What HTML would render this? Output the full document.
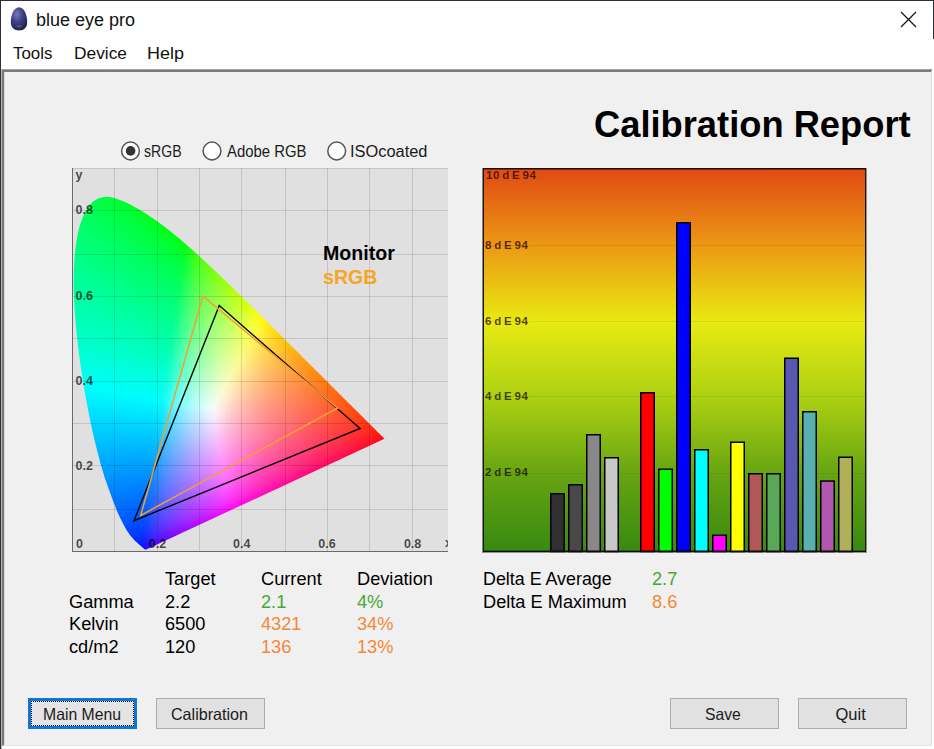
<!DOCTYPE html>
<html><head><meta charset="utf-8">
<style>
html,body{margin:0;padding:0;}
body{width:934px;height:749px;overflow:hidden;position:relative;background:#fff;font-family:"Liberation Sans",sans-serif;color:#000;}
.a{position:absolute;white-space:nowrap;line-height:1;}
#frameL{left:0;top:0;width:1px;height:749px;background:#2c2f37;}
#frameL2{left:1px;top:69px;width:1px;height:680px;background:#b4b6bc;}
#panelL{left:4px;top:72px;width:1px;height:673px;background:#dcdcde;}
#frameT{left:0;top:0;width:934px;height:1px;background:#2c2f37;}
#frameR{left:933px;top:0;width:1px;height:39px;background:#2c2f37;}
#panel{left:2px;top:69px;width:930px;height:677px;background:#f0f0f0;box-sizing:border-box;border-top:3px solid #7a7a7a;border-left:2px solid #787878;border-right:1px solid #e0e0e0;border-bottom:1px solid #e3e3e3;}
#panelT{left:2px;top:69px;width:929px;height:1px;background:#a4a4a4;}
.btn{position:absolute;box-sizing:border-box;background:#e1e1e1;border:1px solid #adadad;font-size:15.5px;text-align:center;line-height:29px;color:#000;}
.bt{top:706.3px;font-size:16.5px;transform-origin:0 0;color:#1a1a1a;}
.tbl{font-size:17.5px;transform:scaleX(1.04);transform-origin:0 0;}
.mn{top:45px;font-size:16.2px;transform-origin:0 0;color:#111;}
.rl{font-size:16px;transform-origin:0 0;color:#1a1a1a;}
.grn{color:#48a634;}
.org{color:#f28a38;}
.cl{font-size:12.5px;font-weight:bold;color:rgba(0,0,0,0.7);}
.cc{transform:translateX(-50%);}
.lbl{font-size:11.5px;font-weight:bold;color:rgba(25,0,0,0.72);letter-spacing:0.6px;word-spacing:-1.6px;}
</style></head><body>
<div class="a" id="frameT"></div>
<div class="a" id="frameL"></div>
<div class="a" id="frameR"></div>
<!-- icon -->
<svg class="a" style="left:8px;top:5px" width="24" height="28" viewBox="0 0 24 28">
<defs><radialGradient id="egg" cx="0.38" cy="0.3" r="0.75"><stop offset="0" stop-color="#7a7ab8"/><stop offset="0.45" stop-color="#40408a"/><stop offset="0.85" stop-color="#2a2a5e"/><stop offset="1" stop-color="#1c1c38"/></radialGradient></defs>
<path d="M11 2.3 C16.5 2.3 19.2 11 19.2 17 C19.2 22.5 16 25.5 11 25.5 C6 25.5 2.8 22.5 2.8 17 C2.8 11 5.5 2.3 11 2.3 Z" fill="url(#egg)"/>
<ellipse cx="11.3" cy="21.3" rx="2.6" ry="0.9" fill="#8888c0" opacity="0.5"/>
</svg>
<div class="a" style="left:35.6px;top:12px;font-size:17.6px;transform:scaleX(1.023);transform-origin:0 0;color:#111;">blue eye pro</div>
<svg class="a" style="left:900px;top:11px" width="18" height="18"><path d="M1 1 L16 16 M16 1 L1 16" stroke="#111" stroke-width="1.2"/></svg>
<div class="a mn" style="left:13.2px;transform:scaleX(1.044);">Tools</div>
<div class="a mn" style="left:73.5px;transform:scaleX(1.07);">Device</div>
<div class="a mn" style="left:147px;transform:scaleX(1.11);">Help</div>

<div class="a" id="panel"></div>
<div class="a" id="panelT"></div>
<div class="a" id="frameL2"></div>
<div class="a" id="panelL"></div>

<div class="a" style="left:594px;top:106.6px;font-size:36.3px;font-weight:bold;">Calibration Report</div>

<!-- radios -->
<svg class="a" style="left:120px;top:141px" width="230" height="20">
<circle cx="10.5" cy="10" r="8.9" fill="#fff" stroke="#555" stroke-width="1.5"/>
<circle cx="10.6" cy="9.9" r="4.8" fill="#333"/>
<circle cx="92" cy="10" r="8.9" fill="#fff" stroke="#555" stroke-width="1.5"/>
<circle cx="216.7" cy="10" r="8.9" fill="#fff" stroke="#555" stroke-width="1.5"/>
</svg>
<div class="a rl" style="left:144.2px;top:143.7px;transform:scaleX(0.88);">sRGB</div>
<div class="a rl" style="left:226.5px;top:143.7px;transform:scaleX(0.93);">Adobe RGB</div>
<div class="a rl" style="left:349.6px;top:143.7px;transform:scaleX(1.025);">ISOcoated</div>

<!-- CIE chart -->
<svg class="a" style="left:72px;top:168px" width="376" height="384"><rect x="0" y="0" width="376" height="384" fill="#e0e0e0"/><defs><clipPath id="loc"><path d="M74.2,381.5 L74.2,381.5 L74.2,381.5 L74.1,381.5 L74.1,381.5 L74.1,381.5 L74.1,381.5 L74.1,381.5 L74.1,381.5 L74.1,381.5 L74.1,381.5 L74.1,381.5 L74.1,381.6 L74.1,381.6 L74.1,381.6 L74.0,381.6 L74.0,381.6 L74.0,381.6 L74.0,381.6 L74.0,381.6 L74.0,381.6 L74.0,381.6 L74.0,381.6 L74.0,381.6 L73.9,381.6 L73.9,381.6 L73.9,381.6 L73.9,381.6 L73.9,381.6 L73.9,381.6 L73.9,381.6 L73.8,381.6 L73.8,381.6 L73.8,381.6 L73.8,381.6 L73.8,381.6 L73.8,381.6 L73.7,381.6 L73.7,381.6 L73.7,381.6 L73.7,381.6 L73.7,381.6 L73.7,381.6 L73.6,381.6 L73.6,381.6 L73.6,381.6 L73.6,381.6 L73.5,381.6 L73.5,381.6 L73.5,381.6 L73.5,381.6 L73.4,381.6 L73.4,381.6 L73.4,381.6 L73.4,381.6 L73.3,381.6 L73.3,381.6 L73.3,381.6 L73.2,381.6 L73.2,381.6 L73.2,381.6 L73.1,381.6 L73.1,381.5 L73.1,381.5 L73.0,381.5 L73.0,381.5 L72.9,381.4 L72.9,381.4 L72.8,381.4 L72.7,381.3 L72.7,381.3 L72.6,381.2 L72.5,381.2 L72.5,381.1 L72.4,381.1 L72.3,381.0 L72.3,381.0 L72.2,380.9 L72.1,380.9 L72.0,380.8 L71.9,380.7 L71.9,380.6 L71.8,380.6 L71.7,380.5 L71.6,380.4 L71.4,380.3 L71.3,380.2 L71.2,380.1 L71.1,380.0 L71.0,379.9 L70.9,379.8 L70.7,379.7 L70.6,379.5 L70.5,379.4 L70.3,379.3 L70.2,379.2 L70.0,379.0 L69.9,378.9 L69.7,378.7 L69.6,378.6 L69.4,378.4 L69.2,378.3 L69.0,378.1 L68.8,378.0 L68.6,377.8 L68.4,377.6 L68.2,377.4 L68.0,377.2 L67.7,377.0 L67.5,376.8 L67.2,376.6 L67.0,376.4 L66.7,376.1 L66.4,375.9 L66.2,375.7 L65.9,375.4 L65.6,375.1 L65.3,374.9 L65.0,374.6 L64.7,374.3 L64.3,374.0 L64.0,373.7 L63.6,373.4 L63.3,373.0 L62.9,372.7 L62.5,372.3 L62.2,371.9 L61.8,371.5 L61.4,371.0 L60.9,370.6 L60.5,370.1 L60.1,369.6 L59.7,369.1 L59.2,368.6 L58.7,368.0 L58.3,367.4 L57.7,366.7 L57.2,365.9 L56.7,365.1 L56.1,364.3 L55.5,363.4 L54.9,362.4 L54.2,361.4 L53.6,360.3 L52.9,359.1 L52.2,357.8 L51.5,356.5 L50.8,355.1 L50.0,353.6 L49.2,352.1 L48.4,350.4 L47.6,348.7 L46.7,346.7 L45.8,344.7 L44.9,342.6 L44.0,340.4 L43.1,338.0 L42.1,335.5 L41.1,332.9 L40.0,330.1 L39.0,327.2 L37.8,324.1 L36.7,320.9 L35.5,317.5 L34.3,314.0 L33.0,310.4 L31.8,306.5 L30.6,302.5 L29.3,298.3 L28.1,293.9 L26.9,289.3 L25.6,284.5 L24.4,279.5 L23.1,274.4 L21.9,269.2 L20.6,263.7 L19.4,258.2 L18.2,252.4 L17.0,246.4 L15.8,240.3 L14.6,234.0 L13.4,227.6 L12.2,221.1 L11.1,214.6 L10.1,208.1 L9.1,201.5 L8.2,194.9 L7.3,188.1 L6.4,181.3 L5.6,174.5 L4.8,167.8 L4.2,161.1 L3.6,154.6 L3.1,148.2 L2.7,141.8 L2.3,135.4 L2.0,129.1 L1.8,122.8 L1.7,116.8 L1.7,110.8 L1.8,105.1 L2.0,99.5 L2.3,94.0 L2.7,88.6 L3.1,83.4 L3.7,78.3 L4.4,73.5 L5.2,68.9 L6.0,64.5 L7.0,60.4 L8.1,56.5 L9.4,52.9 L10.7,49.4 L12.1,46.2 L13.6,43.3 L15.1,40.6 L16.7,38.2 L18.3,36.2 L20.1,34.4 L21.9,33.0 L23.8,31.8 L25.7,30.8 L27.7,30.0 L29.7,29.4 L31.7,29.0 L33.7,28.7 L35.8,28.8 L37.9,29.0 L40.1,29.5 L42.2,30.0 L44.4,30.7 L46.5,31.4 L48.7,32.2 L50.8,33.0 L53.0,33.9 L55.2,35.0 L57.3,36.1 L59.5,37.2 L61.7,38.4 L63.8,39.6 L65.9,40.8 L68.0,42.0 L70.1,43.3 L72.1,44.5 L74.1,45.8 L76.1,47.1 L78.2,48.5 L80.2,49.8 L82.2,51.2 L84.1,52.6 L86.1,54.0 L88.1,55.4 L90.0,56.8 L91.9,58.3 L93.9,59.8 L95.8,61.3 L97.8,62.8 L99.7,64.3 L101.6,65.9 L103.6,67.4 L105.5,69.0 L107.4,70.6 L109.3,72.3 L111.2,73.9 L113.1,75.5 L115.1,77.2 L117.0,78.9 L118.9,80.6 L120.8,82.3 L122.7,84.0 L124.6,85.7 L126.5,87.4 L128.4,89.2 L130.3,90.9 L132.2,92.7 L134.1,94.4 L136.0,96.2 L137.9,98.0 L139.8,99.8 L141.7,101.6 L143.5,103.4 L145.5,105.2 L147.4,107.0 L149.3,108.8 L151.2,110.6 L153.1,112.5 L155.0,114.3 L156.9,116.2 L158.8,118.0 L160.7,119.8 L162.6,121.7 L164.5,123.5 L166.4,125.4 L168.2,127.3 L170.1,129.1 L172.0,131.0 L173.9,132.8 L175.8,134.7 L177.7,136.6 L179.6,138.4 L181.5,140.3 L183.3,142.1 L185.2,144.0 L187.1,145.8 L189.0,147.7 L190.8,149.5 L192.7,151.4 L194.5,153.2 L196.4,155.1 L198.2,156.9 L200.1,158.7 L201.9,160.6 L203.7,162.4 L205.5,164.2 L207.3,166.0 L209.1,167.8 L210.9,169.6 L212.7,171.4 L214.5,173.1 L216.3,174.9 L218.0,176.7 L219.8,178.4 L221.5,180.1 L223.3,181.9 L225.0,183.6 L226.7,185.3 L228.4,187.0 L230.1,188.7 L231.8,190.4 L233.4,192.0 L235.1,193.7 L236.7,195.3 L238.4,196.9 L240.0,198.5 L241.6,200.1 L243.1,201.7 L244.7,203.2 L246.2,204.7 L247.8,206.3 L249.3,207.8 L250.8,209.3 L252.2,210.7 L253.7,212.2 L255.1,213.6 L256.5,215.0 L257.8,216.3 L259.2,217.7 L260.5,219.0 L261.8,220.3 L263.0,221.5 L264.3,222.8 L265.5,224.0 L266.7,225.2 L267.9,226.4 L269.1,227.6 L270.3,228.7 L271.4,229.9 L272.5,231.0 L273.6,232.1 L274.7,233.1 L275.7,234.2 L276.8,235.2 L277.8,236.2 L278.7,237.1 L279.7,238.1 L280.6,239.0 L281.5,239.9 L282.4,240.7 L283.2,241.6 L284.1,242.4 L284.9,243.2 L285.7,244.0 L286.4,244.8 L287.2,245.5 L287.9,246.3 L288.6,247.0 L289.3,247.7 L290.0,248.3 L290.6,249.0 L291.3,249.6 L291.9,250.2 L292.5,250.8 L293.0,251.4 L293.6,252.0 L294.2,252.5 L294.7,253.0 L295.2,253.6 L295.7,254.1 L296.2,254.5 L296.7,255.0 L297.1,255.5 L297.6,255.9 L298.0,256.3 L298.5,256.8 L298.9,257.2 L299.3,257.6 L299.7,258.0 L300.0,258.3 L300.4,258.7 L300.8,259.1 L301.1,259.4 L301.5,259.8 L301.8,260.1 L302.2,260.5 L302.5,260.8 L302.8,261.1 L303.1,261.4 L303.4,261.7 L303.7,262.0 L304.0,262.3 L304.3,262.6 L304.6,262.9 L304.8,263.2 L305.1,263.4 L305.4,263.7 L305.6,263.9 L305.8,264.2 L306.1,264.4 L306.3,264.6 L306.5,264.8 L306.8,265.0 L307.0,265.3 L307.2,265.4 L307.4,265.6 L307.5,265.8 L307.7,266.0 L307.9,266.2 L308.1,266.3 L308.2,266.5 L308.4,266.7 L308.5,266.8 L308.7,267.0 L308.8,267.1 L309.0,267.2 L309.1,267.4 L309.2,267.5 L309.3,267.6 L309.5,267.7 L309.6,267.9 L309.7,268.0 L309.8,268.1 L309.9,268.2 L310.0,268.3 L310.1,268.4 L310.2,268.5 L310.3,268.6 L310.4,268.6 L310.4,268.7 L310.5,268.8 L310.6,268.9 L310.7,268.9 L310.7,269.0 L310.8,269.1 L310.8,269.1 L310.9,269.2 L310.9,269.2 L311.0,269.3 L311.0,269.3 L311.1,269.4 L311.1,269.4 L311.2,269.5 L311.2,269.5 L311.3,269.5 L311.3,269.6 L311.4,269.7 L311.4,269.7 L311.5,269.8 L311.6,269.9 L311.7,269.9 L311.7,270.0 L311.8,270.1 L311.9,270.2 L312.0,270.2 L312.0,270.3 L312.1,270.4 L312.2,270.5 L312.3,270.6 L312.4,270.6 L312.4,270.7 L312.5,270.8 L312.5,270.8 Z"/></clipPath><linearGradient id="g0" gradientUnits="userSpaceOnUse" x1="0" y1="71.5" x2="0" y2="165.5"><stop offset="0.000" stop-color="#00ff77"/><stop offset="1.000" stop-color="#00ffc6"/></linearGradient><linearGradient id="g1" gradientUnits="userSpaceOnUse" x1="0" y1="57.5" x2="0" y2="191.5"><stop offset="0.000" stop-color="#00ff6b"/><stop offset="0.776" stop-color="#00ffc2"/><stop offset="1.000" stop-color="#00ffe0"/></linearGradient><linearGradient id="g2" gradientUnits="userSpaceOnUse" x1="0" y1="48.5" x2="0" y2="211.5"><stop offset="0.000" stop-color="#00ff62"/><stop offset="0.687" stop-color="#00ffc0"/><stop offset="1.000" stop-color="#00fff6"/></linearGradient><linearGradient id="g3" gradientUnits="userSpaceOnUse" x1="0" y1="41.5" x2="0" y2="229.5"><stop offset="0.000" stop-color="#00ff5b"/><stop offset="0.633" stop-color="#00ffbf"/><stop offset="0.947" stop-color="#00fdfd"/><stop offset="1.000" stop-color="#00f3ff"/></linearGradient><linearGradient id="g4" gradientUnits="userSpaceOnUse" x1="0" y1="36.5" x2="0" y2="245.5"><stop offset="0.000" stop-color="#00ff54"/><stop offset="0.603" stop-color="#00ffc0"/><stop offset="0.880" stop-color="#00fdfd"/><stop offset="1.000" stop-color="#00e0ff"/></linearGradient><linearGradient id="g5" gradientUnits="userSpaceOnUse" x1="0" y1="33.5" x2="0" y2="259.5"><stop offset="0.000" stop-color="#00ff50"/><stop offset="0.575" stop-color="#00ffc0"/><stop offset="0.827" stop-color="#00fdfd"/><stop offset="1.000" stop-color="#00d0ff"/></linearGradient><linearGradient id="g6" gradientUnits="userSpaceOnUse" x1="0" y1="31.5" x2="0" y2="273.5"><stop offset="0.000" stop-color="#00ff4c"/><stop offset="0.554" stop-color="#00ffc1"/><stop offset="0.785" stop-color="#00fdfd"/><stop offset="1.000" stop-color="#00c0ff"/></linearGradient><linearGradient id="g7" gradientUnits="userSpaceOnUse" x1="0" y1="29.5" x2="0" y2="285.5"><stop offset="0.000" stop-color="#00ff47"/><stop offset="0.543" stop-color="#00ffc3"/><stop offset="0.750" stop-color="#00fdfd"/><stop offset="1.000" stop-color="#00b2ff"/></linearGradient><linearGradient id="g8" gradientUnits="userSpaceOnUse" x1="0" y1="28.5" x2="0" y2="296.5"><stop offset="0.000" stop-color="#00ff44"/><stop offset="0.530" stop-color="#00ffc4"/><stop offset="0.724" stop-color="#00fdfd"/><stop offset="1.000" stop-color="#00a6ff"/></linearGradient><linearGradient id="g9" gradientUnits="userSpaceOnUse" x1="0" y1="27.5" x2="0" y2="307.5"><stop offset="0.000" stop-color="#00ff40"/><stop offset="0.518" stop-color="#00ffc4"/><stop offset="0.696" stop-color="#00fdfd"/><stop offset="1.000" stop-color="#0099ff"/></linearGradient><linearGradient id="g10" gradientUnits="userSpaceOnUse" x1="0" y1="27.5" x2="0" y2="316.5"><stop offset="0.000" stop-color="#00ff3d"/><stop offset="0.287" stop-color="#00ff89"/><stop offset="0.543" stop-color="#00ffd0"/><stop offset="0.678" stop-color="#00fdfd"/><stop offset="1.000" stop-color="#008eff"/></linearGradient><linearGradient id="g11" gradientUnits="userSpaceOnUse" x1="0" y1="27.5" x2="0" y2="324.5"><stop offset="0.000" stop-color="#00ff3a"/><stop offset="0.226" stop-color="#00ff7a"/><stop offset="0.505" stop-color="#00ffc8"/><stop offset="0.660" stop-color="#00fdfd"/><stop offset="0.916" stop-color="#00a1ff"/><stop offset="1.000" stop-color="#0084ff"/></linearGradient><linearGradient id="g12" gradientUnits="userSpaceOnUse" x1="0" y1="27.5" x2="0" y2="332.5"><stop offset="0.000" stop-color="#00ff37"/><stop offset="0.190" stop-color="#00ff70"/><stop offset="0.482" stop-color="#00ffc3"/><stop offset="0.646" stop-color="#00fdfd"/><stop offset="1.000" stop-color="#007aff"/></linearGradient><linearGradient id="g13" gradientUnits="userSpaceOnUse" x1="0" y1="27.5" x2="0" y2="340.5"><stop offset="0.000" stop-color="#00ff34"/><stop offset="0.160" stop-color="#00ff67"/><stop offset="0.466" stop-color="#00ffc1"/><stop offset="0.629" stop-color="#00fdfd"/><stop offset="0.827" stop-color="#00b0ff"/><stop offset="1.000" stop-color="#006fff"/></linearGradient><linearGradient id="g14" gradientUnits="userSpaceOnUse" x1="0" y1="28.5" x2="0" y2="347.5"><stop offset="0.000" stop-color="#00ff32"/><stop offset="0.141" stop-color="#00ff61"/><stop offset="0.455" stop-color="#00ffc0"/><stop offset="0.614" stop-color="#00fdfc"/><stop offset="0.712" stop-color="#00d6ff"/><stop offset="1.000" stop-color="#0065ff"/></linearGradient><linearGradient id="g15" gradientUnits="userSpaceOnUse" x1="0" y1="28.5" x2="0" y2="354.5"><stop offset="0.000" stop-color="#00ff2e"/><stop offset="0.117" stop-color="#00ff58"/><stop offset="0.445" stop-color="#00ffbf"/><stop offset="0.604" stop-color="#00fdfd"/><stop offset="0.764" stop-color="#00bbff"/><stop offset="1.000" stop-color="#005aff"/></linearGradient><linearGradient id="g16" gradientUnits="userSpaceOnUse" x1="0" y1="29.5" x2="0" y2="359.5"><stop offset="0.000" stop-color="#00ff2b"/><stop offset="0.103" stop-color="#00ff53"/><stop offset="0.442" stop-color="#00ffc0"/><stop offset="0.594" stop-color="#00fdfc"/><stop offset="0.679" stop-color="#00d9ff"/><stop offset="0.985" stop-color="#0059ff"/><stop offset="1.000" stop-color="#0051ff"/></linearGradient><linearGradient id="g17" gradientUnits="userSpaceOnUse" x1="0" y1="31.5" x2="0" y2="364.5"><stop offset="0.000" stop-color="#00ff2a"/><stop offset="0.096" stop-color="#00ff51"/><stop offset="0.432" stop-color="#00ffbf"/><stop offset="0.586" stop-color="#00fdfc"/><stop offset="0.721" stop-color="#00c2ff"/><stop offset="0.967" stop-color="#0059ff"/><stop offset="1.000" stop-color="#0047ff"/></linearGradient><linearGradient id="g18" gradientUnits="userSpaceOnUse" x1="0" y1="32.5" x2="0" y2="369.5"><stop offset="0.000" stop-color="#00ff27"/><stop offset="0.083" stop-color="#00ff4b"/><stop offset="0.430" stop-color="#00ffc0"/><stop offset="0.576" stop-color="#00fdfc"/><stop offset="0.653" stop-color="#00dbff"/><stop offset="0.950" stop-color="#0059ff"/><stop offset="1.000" stop-color="#003cff"/></linearGradient><linearGradient id="g19" gradientUnits="userSpaceOnUse" x1="0" y1="33.5" x2="0" y2="372.5"><stop offset="0.000" stop-color="#00ff24"/><stop offset="0.068" stop-color="#00ff44"/><stop offset="0.434" stop-color="#00ffc2"/><stop offset="0.572" stop-color="#00fdfc"/><stop offset="0.687" stop-color="#00c9ff"/><stop offset="0.938" stop-color="#0059ff"/><stop offset="1.000" stop-color="#0033ff"/></linearGradient><linearGradient id="g20" gradientUnits="userSpaceOnUse" x1="0" y1="35.5" x2="0" y2="375.5"><stop offset="0.000" stop-color="#00ff22"/><stop offset="0.062" stop-color="#00ff41"/><stop offset="0.435" stop-color="#00ffc4"/><stop offset="0.565" stop-color="#00fdfc"/><stop offset="0.635" stop-color="#00ddff"/><stop offset="0.926" stop-color="#0059ff"/><stop offset="0.988" stop-color="#0033ff"/><stop offset="1.000" stop-color="#0028ff"/></linearGradient><linearGradient id="g21" gradientUnits="userSpaceOnUse" x1="0" y1="36.5" x2="0" y2="378.5"><stop offset="0.000" stop-color="#00ff1f"/><stop offset="0.053" stop-color="#00ff3b"/><stop offset="0.231" stop-color="#00ff7b"/><stop offset="0.442" stop-color="#00ffc7"/><stop offset="0.561" stop-color="#00fdfc"/><stop offset="0.664" stop-color="#00cdff"/><stop offset="0.915" stop-color="#0059ff"/><stop offset="0.977" stop-color="#0132ff"/><stop offset="1.000" stop-color="#011bff"/></linearGradient><linearGradient id="g22" gradientUnits="userSpaceOnUse" x1="0" y1="38.5" x2="0" y2="380.5"><stop offset="0.000" stop-color="#00ff1d"/><stop offset="0.050" stop-color="#00ff39"/><stop offset="0.208" stop-color="#00ff74"/><stop offset="0.433" stop-color="#00ffc5"/><stop offset="0.556" stop-color="#00fdfc"/><stop offset="0.623" stop-color="#00deff"/><stop offset="0.906" stop-color="#0159ff"/><stop offset="0.965" stop-color="#0334ff"/><stop offset="1.000" stop-color="#0610ff"/></linearGradient><linearGradient id="g23" gradientUnits="userSpaceOnUse" x1="0" y1="40.5" x2="0" y2="383.5"><stop offset="0.000" stop-color="#00ff1b"/><stop offset="0.047" stop-color="#00ff37"/><stop offset="0.190" stop-color="#00ff6e"/><stop offset="0.423" stop-color="#00ffc3"/><stop offset="0.551" stop-color="#00fdfc"/><stop offset="0.644" stop-color="#00d0ff"/><stop offset="0.895" stop-color="#0359ff"/><stop offset="0.953" stop-color="#0933ff"/><stop offset="0.997" stop-color="#1006ff"/><stop offset="1.000" stop-color="#1005ff"/></linearGradient><linearGradient id="g24" gradientUnits="userSpaceOnUse" x1="0" y1="42.5" x2="0" y2="383.5"><stop offset="0.000" stop-color="#00ff19"/><stop offset="0.044" stop-color="#00ff35"/><stop offset="0.173" stop-color="#00ff67"/><stop offset="0.416" stop-color="#00ffc0"/><stop offset="0.548" stop-color="#00fdfc"/><stop offset="0.610" stop-color="#00e0ff"/><stop offset="0.848" stop-color="#0470ff"/><stop offset="0.933" stop-color="#1040ff"/><stop offset="0.965" stop-color="#1825ff"/><stop offset="0.991" stop-color="#1e08ff"/><stop offset="1.000" stop-color="#1f03ff"/></linearGradient><linearGradient id="g25" gradientUnits="userSpaceOnUse" x1="0" y1="43.5" x2="0" y2="383.5"><stop offset="0.000" stop-color="#00ff14"/><stop offset="0.041" stop-color="#00ff31"/><stop offset="0.150" stop-color="#00ff5e"/><stop offset="0.418" stop-color="#00ffc0"/><stop offset="0.550" stop-color="#00fdfc"/><stop offset="0.635" stop-color="#00d3ff"/><stop offset="0.800" stop-color="#0586ff"/><stop offset="0.897" stop-color="#1654ff"/><stop offset="0.950" stop-color="#2430ff"/><stop offset="0.988" stop-color="#2e07ff"/><stop offset="1.000" stop-color="#2f01ff"/></linearGradient><linearGradient id="g26" gradientUnits="userSpaceOnUse" x1="0" y1="45.5" x2="0" y2="381.5"><stop offset="0.000" stop-color="#00ff12"/><stop offset="0.045" stop-color="#00ff31"/><stop offset="0.155" stop-color="#00ff5f"/><stop offset="0.420" stop-color="#00ffc0"/><stop offset="0.551" stop-color="#00fdfc"/><stop offset="0.610" stop-color="#00e1ff"/><stop offset="0.750" stop-color="#069eff"/><stop offset="0.848" stop-color="#196fff"/><stop offset="0.932" stop-color="#2f40ff"/><stop offset="0.964" stop-color="#3623ff"/><stop offset="0.991" stop-color="#3c06ff"/><stop offset="1.000" stop-color="#3d02ff"/></linearGradient><linearGradient id="g27" gradientUnits="userSpaceOnUse" x1="0" y1="47.5" x2="0" y2="380.5"><stop offset="0.000" stop-color="#00ff10"/><stop offset="0.045" stop-color="#00ff30"/><stop offset="0.150" stop-color="#00ff5c"/><stop offset="0.420" stop-color="#00ffc0"/><stop offset="0.553" stop-color="#00fdfc"/><stop offset="0.631" stop-color="#01d7ff"/><stop offset="0.730" stop-color="#0ca7ff"/><stop offset="0.895" stop-color="#3656ff"/><stop offset="0.949" stop-color="#4131ff"/><stop offset="0.991" stop-color="#4806ff"/><stop offset="1.000" stop-color="#4902ff"/></linearGradient><linearGradient id="g28" gradientUnits="userSpaceOnUse" x1="0" y1="49.5" x2="0" y2="379.5"><stop offset="0.000" stop-color="#00ff0e"/><stop offset="0.045" stop-color="#00ff2f"/><stop offset="0.142" stop-color="#00ff58"/><stop offset="0.421" stop-color="#00ffc0"/><stop offset="0.552" stop-color="#01fdfc"/><stop offset="0.609" stop-color="#04e2ff"/><stop offset="0.703" stop-color="#14b4ff"/><stop offset="0.879" stop-color="#415eff"/><stop offset="0.942" stop-color="#4c36ff"/><stop offset="0.973" stop-color="#5016ff"/><stop offset="0.991" stop-color="#5205ff"/><stop offset="1.000" stop-color="#5301ff"/></linearGradient><linearGradient id="g29" gradientUnits="userSpaceOnUse" x1="0" y1="52.5" x2="0" y2="377.5"><stop offset="0.000" stop-color="#00ff0e"/><stop offset="0.046" stop-color="#00ff2f"/><stop offset="0.145" stop-color="#00ff59"/><stop offset="0.422" stop-color="#00ffc0"/><stop offset="0.554" stop-color="#05fdfc"/><stop offset="0.628" stop-color="#11d9ff"/><stop offset="0.818" stop-color="#437eff"/><stop offset="0.920" stop-color="#5347ff"/><stop offset="0.957" stop-color="#572aff"/><stop offset="0.991" stop-color="#5b06ff"/><stop offset="1.000" stop-color="#5c02ff"/></linearGradient><linearGradient id="g30" gradientUnits="userSpaceOnUse" x1="0" y1="54.5" x2="0" y2="376.5"><stop offset="0.000" stop-color="#00ff0c"/><stop offset="0.050" stop-color="#00ff2f"/><stop offset="0.149" stop-color="#00ff5a"/><stop offset="0.422" stop-color="#01ffc0"/><stop offset="0.525" stop-color="#09ffef"/><stop offset="0.562" stop-color="#11fafe"/><stop offset="0.755" stop-color="#469cff"/><stop offset="0.901" stop-color="#5b52ff"/><stop offset="0.950" stop-color="#602fff"/><stop offset="0.988" stop-color="#6308ff"/><stop offset="1.000" stop-color="#6402ff"/></linearGradient><linearGradient id="g31" gradientUnits="userSpaceOnUse" x1="0" y1="56.5" x2="0" y2="374.5"><stop offset="0.000" stop-color="#00ff0a"/><stop offset="0.053" stop-color="#00ff30"/><stop offset="0.154" stop-color="#00ff5b"/><stop offset="0.418" stop-color="#03ffbd"/><stop offset="0.503" stop-color="#11ffe3"/><stop offset="0.560" stop-color="#23fcfd"/><stop offset="0.686" stop-color="#47beff"/><stop offset="0.830" stop-color="#5e79ff"/><stop offset="0.925" stop-color="#6745ff"/><stop offset="0.959" stop-color="#6a28ff"/><stop offset="0.991" stop-color="#6c07ff"/><stop offset="1.000" stop-color="#6c02ff"/></linearGradient><linearGradient id="g32" gradientUnits="userSpaceOnUse" x1="0" y1="58.5" x2="0" y2="373.5"><stop offset="0.000" stop-color="#00ff09"/><stop offset="0.057" stop-color="#00ff30"/><stop offset="0.159" stop-color="#00ff5c"/><stop offset="0.362" stop-color="#04ffa6"/><stop offset="0.448" stop-color="#12ffc9"/><stop offset="0.546" stop-color="#35fef8"/><stop offset="0.578" stop-color="#40f4ff"/><stop offset="0.692" stop-color="#59baff"/><stop offset="0.889" stop-color="#6d5aff"/><stop offset="0.946" stop-color="#7134ff"/><stop offset="0.990" stop-color="#7406ff"/><stop offset="1.000" stop-color="#7402ff"/></linearGradient><linearGradient id="g33" gradientUnits="userSpaceOnUse" x1="0" y1="61.5" x2="0" y2="372.5"><stop offset="0.000" stop-color="#00ff09"/><stop offset="0.058" stop-color="#00ff31"/><stop offset="0.161" stop-color="#00ff5d"/><stop offset="0.312" stop-color="#05ff93"/><stop offset="0.399" stop-color="#16ffb5"/><stop offset="0.527" stop-color="#45ffef"/><stop offset="0.563" stop-color="#51fafd"/><stop offset="0.688" stop-color="#66bcff"/><stop offset="0.887" stop-color="#765aff"/><stop offset="0.945" stop-color="#7933ff"/><stop offset="0.987" stop-color="#7b08ff"/><stop offset="1.000" stop-color="#7c02ff"/></linearGradient><linearGradient id="g34" gradientUnits="userSpaceOnUse" x1="0" y1="63.5" x2="0" y2="370.5"><stop offset="0.000" stop-color="#00ff07"/><stop offset="0.065" stop-color="#00ff33"/><stop offset="0.179" stop-color="#01ff62"/><stop offset="0.287" stop-color="#0bff89"/><stop offset="0.384" stop-color="#25ffae"/><stop offset="0.521" stop-color="#55ffeb"/><stop offset="0.564" stop-color="#63fbfd"/><stop offset="0.723" stop-color="#75acff"/><stop offset="0.893" stop-color="#7f58ff"/><stop offset="0.948" stop-color="#8132ff"/><stop offset="0.990" stop-color="#8307ff"/><stop offset="1.000" stop-color="#8302ff"/></linearGradient><linearGradient id="g35" gradientUnits="userSpaceOnUse" x1="0" y1="65.5" x2="0" y2="369.5"><stop offset="0.000" stop-color="#00ff06"/><stop offset="0.069" stop-color="#00ff34"/><stop offset="0.184" stop-color="#06ff63"/><stop offset="0.280" stop-color="#18ff86"/><stop offset="0.461" stop-color="#52ffcd"/><stop offset="0.559" stop-color="#72fcfc"/><stop offset="0.622" stop-color="#79deff"/><stop offset="0.891" stop-color="#8758ff"/><stop offset="0.944" stop-color="#8935ff"/><stop offset="0.990" stop-color="#8a06ff"/><stop offset="1.000" stop-color="#8a02ff"/></linearGradient><linearGradient id="g36" gradientUnits="userSpaceOnUse" x1="0" y1="68.5" x2="0" y2="368.5"><stop offset="0.000" stop-color="#00ff06"/><stop offset="0.070" stop-color="#02ff34"/><stop offset="0.173" stop-color="#0fff5f"/><stop offset="0.323" stop-color="#39ff96"/><stop offset="0.483" stop-color="#69ffd8"/><stop offset="0.557" stop-color="#80fdfb"/><stop offset="0.607" stop-color="#85e5ff"/><stop offset="0.890" stop-color="#8f58ff"/><stop offset="0.943" stop-color="#9034ff"/><stop offset="0.987" stop-color="#9108ff"/><stop offset="1.000" stop-color="#9102ff"/></linearGradient><linearGradient id="g37" gradientUnits="userSpaceOnUse" x1="0" y1="70.5" x2="0" y2="366.5"><stop offset="0.000" stop-color="#03ff05"/><stop offset="0.034" stop-color="#05ff1b"/><stop offset="0.081" stop-color="#0bff38"/><stop offset="0.203" stop-color="#28ff69"/><stop offset="0.436" stop-color="#68ffc1"/><stop offset="0.557" stop-color="#8dfdfb"/><stop offset="0.601" stop-color="#91eaff"/><stop offset="0.892" stop-color="#9758ff"/><stop offset="0.946" stop-color="#9734ff"/><stop offset="0.990" stop-color="#9807ff"/><stop offset="1.000" stop-color="#9802ff"/></linearGradient><linearGradient id="g38" gradientUnits="userSpaceOnUse" x1="0" y1="73.5" x2="0" y2="365.5"><stop offset="0.000" stop-color="#0aff05"/><stop offset="0.034" stop-color="#10ff1b"/><stop offset="0.082" stop-color="#1bff39"/><stop offset="0.226" stop-color="#40ff72"/><stop offset="0.442" stop-color="#77ffc4"/><stop offset="0.558" stop-color="#9afdfb"/><stop offset="0.606" stop-color="#9de7ff"/><stop offset="0.890" stop-color="#9f58ff"/><stop offset="0.945" stop-color="#9f33ff"/><stop offset="0.986" stop-color="#9f09ff"/><stop offset="1.000" stop-color="#9f02ff"/></linearGradient><linearGradient id="g39" gradientUnits="userSpaceOnUse" x1="0" y1="76.5" x2="0" y2="363.5"><stop offset="0.000" stop-color="#19ff05"/><stop offset="0.035" stop-color="#21ff1b"/><stop offset="0.084" stop-color="#2dff39"/><stop offset="0.230" stop-color="#50ff73"/><stop offset="0.443" stop-color="#83ffc4"/><stop offset="0.557" stop-color="#a6fdfa"/><stop offset="0.599" stop-color="#a8ebff"/><stop offset="0.892" stop-color="#a658ff"/><stop offset="0.944" stop-color="#a635ff"/><stop offset="0.990" stop-color="#a608ff"/><stop offset="1.000" stop-color="#a603ff"/></linearGradient><linearGradient id="g40" gradientUnits="userSpaceOnUse" x1="0" y1="78.5" x2="0" y2="362.5"><stop offset="0.000" stop-color="#2aff04"/><stop offset="0.032" stop-color="#31ff16"/><stop offset="0.081" stop-color="#3dff36"/><stop offset="0.208" stop-color="#58ff6a"/><stop offset="0.437" stop-color="#8dffc1"/><stop offset="0.560" stop-color="#b2fdfb"/><stop offset="0.609" stop-color="#b3e6ff"/><stop offset="0.891" stop-color="#ae58ff"/><stop offset="0.944" stop-color="#ad35ff"/><stop offset="0.989" stop-color="#ac07ff"/><stop offset="1.000" stop-color="#ac02ff"/></linearGradient><linearGradient id="g41" gradientUnits="userSpaceOnUse" x1="0" y1="81.5" x2="0" y2="361.5"><stop offset="0.000" stop-color="#3aff04"/><stop offset="0.032" stop-color="#41ff17"/><stop offset="0.082" stop-color="#4bff37"/><stop offset="0.211" stop-color="#64ff6b"/><stop offset="0.432" stop-color="#97ffc0"/><stop offset="0.557" stop-color="#bdfdfa"/><stop offset="0.600" stop-color="#beeaff"/><stop offset="0.889" stop-color="#b559ff"/><stop offset="0.943" stop-color="#b434ff"/><stop offset="0.986" stop-color="#b309ff"/><stop offset="1.000" stop-color="#b302ff"/></linearGradient><linearGradient id="g42" gradientUnits="userSpaceOnUse" x1="0" y1="84.5" x2="0" y2="359.5"><stop offset="0.000" stop-color="#48ff04"/><stop offset="0.033" stop-color="#4eff17"/><stop offset="0.080" stop-color="#56ff36"/><stop offset="0.204" stop-color="#6dff68"/><stop offset="0.418" stop-color="#9dffb9"/><stop offset="0.560" stop-color="#c8fdfb"/><stop offset="0.607" stop-color="#c8e7ff"/><stop offset="0.891" stop-color="#bd59ff"/><stop offset="0.945" stop-color="#bb33ff"/><stop offset="0.989" stop-color="#ba08ff"/><stop offset="1.000" stop-color="#ba03ff"/></linearGradient><linearGradient id="g43" gradientUnits="userSpaceOnUse" x1="0" y1="86.5" x2="0" y2="358.5"><stop offset="0.000" stop-color="#53ff03"/><stop offset="0.029" stop-color="#58ff12"/><stop offset="0.081" stop-color="#61ff34"/><stop offset="0.195" stop-color="#75ff64"/><stop offset="0.408" stop-color="#a5ffb4"/><stop offset="0.559" stop-color="#d3fdfa"/><stop offset="0.599" stop-color="#d3ecff"/><stop offset="0.890" stop-color="#c459ff"/><stop offset="0.941" stop-color="#c236ff"/><stop offset="0.989" stop-color="#c107ff"/><stop offset="1.000" stop-color="#c002ff"/></linearGradient><linearGradient id="g44" gradientUnits="userSpaceOnUse" x1="0" y1="89.5" x2="0" y2="356.5"><stop offset="0.000" stop-color="#5eff03"/><stop offset="0.030" stop-color="#62ff12"/><stop offset="0.082" stop-color="#6bff35"/><stop offset="0.202" stop-color="#80ff67"/><stop offset="0.408" stop-color="#aeffb4"/><stop offset="0.558" stop-color="#ddfdf9"/><stop offset="0.596" stop-color="#deeeff"/><stop offset="0.895" stop-color="#cb57ff"/><stop offset="0.948" stop-color="#c932ff"/><stop offset="0.989" stop-color="#c709ff"/><stop offset="1.000" stop-color="#c703ff"/></linearGradient><linearGradient id="g45" gradientUnits="userSpaceOnUse" x1="0" y1="92.5" x2="0" y2="355.5"><stop offset="0.000" stop-color="#67ff03"/><stop offset="0.030" stop-color="#6cff13"/><stop offset="0.084" stop-color="#75ff36"/><stop offset="0.205" stop-color="#8bff68"/><stop offset="0.407" stop-color="#b8ffb4"/><stop offset="0.559" stop-color="#e7fdfa"/><stop offset="0.605" stop-color="#e7e9ff"/><stop offset="0.890" stop-color="#d359ff"/><stop offset="0.943" stop-color="#d035ff"/><stop offset="0.989" stop-color="#ce08ff"/><stop offset="1.000" stop-color="#ce03ff"/></linearGradient><linearGradient id="g46" gradientUnits="userSpaceOnUse" x1="0" y1="95.5" x2="0" y2="354.5"><stop offset="0.000" stop-color="#71ff03"/><stop offset="0.031" stop-color="#76ff13"/><stop offset="0.085" stop-color="#7eff36"/><stop offset="0.208" stop-color="#94ff69"/><stop offset="0.405" stop-color="#c1ffb3"/><stop offset="0.552" stop-color="#f0fdf6"/><stop offset="0.595" stop-color="#f1ecfd"/><stop offset="0.884" stop-color="#da5bff"/><stop offset="0.938" stop-color="#d737ff"/><stop offset="0.985" stop-color="#d50aff"/><stop offset="1.000" stop-color="#d402ff"/></linearGradient><linearGradient id="g47" gradientUnits="userSpaceOnUse" x1="0" y1="98.5" x2="0" y2="352.5"><stop offset="0.000" stop-color="#7aff03"/><stop offset="0.031" stop-color="#7fff13"/><stop offset="0.087" stop-color="#87ff37"/><stop offset="0.213" stop-color="#9eff6a"/><stop offset="0.406" stop-color="#cbffb3"/><stop offset="0.543" stop-color="#f5fcf0"/><stop offset="0.587" stop-color="#f9eefa"/><stop offset="0.819" stop-color="#e77fff"/><stop offset="0.917" stop-color="#e048ff"/><stop offset="0.957" stop-color="#de28ff"/><stop offset="0.988" stop-color="#dc09ff"/><stop offset="1.000" stop-color="#db03ff"/></linearGradient><linearGradient id="g48" gradientUnits="userSpaceOnUse" x1="0" y1="100.5" x2="0" y2="351.5"><stop offset="0.000" stop-color="#82ff03"/><stop offset="0.032" stop-color="#87ff11"/><stop offset="0.092" stop-color="#90ff38"/><stop offset="0.219" stop-color="#a8ff6c"/><stop offset="0.406" stop-color="#d4ffb3"/><stop offset="0.522" stop-color="#f7fce5"/><stop offset="0.574" stop-color="#fdeef2"/><stop offset="0.737" stop-color="#f5a5fe"/><stop offset="0.888" stop-color="#e959ff"/><stop offset="0.940" stop-color="#e636ff"/><stop offset="0.988" stop-color="#e308ff"/><stop offset="1.000" stop-color="#e203ff"/></linearGradient><linearGradient id="g49" gradientUnits="userSpaceOnUse" x1="0" y1="103.5" x2="0" y2="349.5"><stop offset="0.000" stop-color="#8aff03"/><stop offset="0.028" stop-color="#8fff0e"/><stop offset="0.089" stop-color="#99ff36"/><stop offset="0.211" stop-color="#afff69"/><stop offset="0.398" stop-color="#dbffaf"/><stop offset="0.504" stop-color="#f8fbda"/><stop offset="0.573" stop-color="#fee7ea"/><stop offset="0.752" stop-color="#f99efb"/><stop offset="0.886" stop-color="#f15cff"/><stop offset="0.943" stop-color="#ed35ff"/><stop offset="0.988" stop-color="#ea0aff"/><stop offset="1.000" stop-color="#e903ff"/></linearGradient><linearGradient id="g50" gradientUnits="userSpaceOnUse" x1="0" y1="106.5" x2="0" y2="348.5"><stop offset="0.000" stop-color="#93ff03"/><stop offset="0.029" stop-color="#97ff0f"/><stop offset="0.091" stop-color="#a1ff37"/><stop offset="0.215" stop-color="#b8ff6a"/><stop offset="0.401" stop-color="#e5ffb0"/><stop offset="0.483" stop-color="#fafad0"/><stop offset="0.566" stop-color="#ffe1e1"/><stop offset="0.777" stop-color="#fc90f9"/><stop offset="0.893" stop-color="#f757fe"/><stop offset="0.942" stop-color="#f334fe"/><stop offset="0.988" stop-color="#f109ff"/><stop offset="1.000" stop-color="#f003ff"/></linearGradient><linearGradient id="g51" gradientUnits="userSpaceOnUse" x1="0" y1="109.5" x2="0" y2="347.5"><stop offset="0.000" stop-color="#9bff03"/><stop offset="0.029" stop-color="#9fff0f"/><stop offset="0.092" stop-color="#aaff38"/><stop offset="0.218" stop-color="#c2ff6b"/><stop offset="0.437" stop-color="#f7fcbe"/><stop offset="0.508" stop-color="#ffecd0"/><stop offset="0.748" stop-color="#ff97f0"/><stop offset="0.870" stop-color="#fc61fa"/><stop offset="0.933" stop-color="#f93afd"/><stop offset="0.987" stop-color="#f708fe"/><stop offset="1.000" stop-color="#f603fe"/></linearGradient><linearGradient id="g52" gradientUnits="userSpaceOnUse" x1="0" y1="112.5" x2="0" y2="345.5"><stop offset="0.000" stop-color="#a3ff03"/><stop offset="0.030" stop-color="#a8ff0f"/><stop offset="0.094" stop-color="#b2ff38"/><stop offset="0.227" stop-color="#ccff6e"/><stop offset="0.412" stop-color="#f8fcb3"/><stop offset="0.489" stop-color="#ffebc6"/><stop offset="0.747" stop-color="#ff94e8"/><stop offset="0.871" stop-color="#fe5ff4"/><stop offset="0.931" stop-color="#fd3cf9"/><stop offset="0.987" stop-color="#fb0afb"/><stop offset="1.000" stop-color="#fb03fc"/></linearGradient><linearGradient id="g53" gradientUnits="userSpaceOnUse" x1="0" y1="115.5" x2="0" y2="344.5"><stop offset="0.000" stop-color="#abff03"/><stop offset="0.031" stop-color="#b0ff10"/><stop offset="0.096" stop-color="#bbff39"/><stop offset="0.231" stop-color="#d5ff70"/><stop offset="0.384" stop-color="#f9fca7"/><stop offset="0.467" stop-color="#ffe9bb"/><stop offset="0.729" stop-color="#ff95e0"/><stop offset="0.865" stop-color="#ff5fed"/><stop offset="0.930" stop-color="#ff3af3"/><stop offset="0.987" stop-color="#fe09f7"/><stop offset="1.000" stop-color="#fe03f8"/></linearGradient><linearGradient id="g54" gradientUnits="userSpaceOnUse" x1="0" y1="118.5" x2="0" y2="342.5"><stop offset="0.000" stop-color="#b3ff03"/><stop offset="0.031" stop-color="#b8ff10"/><stop offset="0.098" stop-color="#c4ff3a"/><stop offset="0.237" stop-color="#dfff72"/><stop offset="0.357" stop-color="#fafb9c"/><stop offset="0.451" stop-color="#ffe6b2"/><stop offset="0.714" stop-color="#ff96d7"/><stop offset="0.862" stop-color="#ff5fe6"/><stop offset="0.929" stop-color="#ff3bec"/><stop offset="0.991" stop-color="#ff08f1"/><stop offset="1.000" stop-color="#ff04f2"/></linearGradient><linearGradient id="g55" gradientUnits="userSpaceOnUse" x1="0" y1="121.5" x2="0" y2="341.5"><stop offset="0.000" stop-color="#bbff03"/><stop offset="0.032" stop-color="#c0ff10"/><stop offset="0.100" stop-color="#ccff3b"/><stop offset="0.245" stop-color="#eaff75"/><stop offset="0.341" stop-color="#fcf995"/><stop offset="0.486" stop-color="#ffd4b2"/><stop offset="0.755" stop-color="#ff84d5"/><stop offset="0.877" stop-color="#ff54e1"/><stop offset="0.936" stop-color="#ff33e7"/><stop offset="0.986" stop-color="#ff09eb"/><stop offset="1.000" stop-color="#ff03ec"/></linearGradient><linearGradient id="g56" gradientUnits="userSpaceOnUse" x1="0" y1="124.5" x2="0" y2="340.5"><stop offset="0.000" stop-color="#c3ff03"/><stop offset="0.032" stop-color="#c9ff11"/><stop offset="0.102" stop-color="#d5ff3b"/><stop offset="0.245" stop-color="#f2fe75"/><stop offset="0.329" stop-color="#fef58e"/><stop offset="0.519" stop-color="#ffc4b1"/><stop offset="0.769" stop-color="#ff7bd0"/><stop offset="0.884" stop-color="#ff4edc"/><stop offset="0.935" stop-color="#ff31e0"/><stop offset="0.986" stop-color="#ff08e5"/><stop offset="1.000" stop-color="#ff03e6"/></linearGradient><linearGradient id="g57" gradientUnits="userSpaceOnUse" x1="0" y1="127.5" x2="0" y2="338.5"><stop offset="0.000" stop-color="#cbff03"/><stop offset="0.033" stop-color="#d1ff11"/><stop offset="0.100" stop-color="#ddff3a"/><stop offset="0.223" stop-color="#f5fe6c"/><stop offset="0.308" stop-color="#fef385"/><stop offset="0.507" stop-color="#ffc1a9"/><stop offset="0.763" stop-color="#ff7aca"/><stop offset="0.886" stop-color="#ff4cd6"/><stop offset="0.938" stop-color="#ff2fda"/><stop offset="0.991" stop-color="#ff07df"/><stop offset="1.000" stop-color="#ff03e0"/></linearGradient><linearGradient id="g58" gradientUnits="userSpaceOnUse" x1="0" y1="129.5" x2="0" y2="337.5"><stop offset="0.000" stop-color="#d3ff02"/><stop offset="0.034" stop-color="#d8ff0f"/><stop offset="0.111" stop-color="#e6ff3d"/><stop offset="0.221" stop-color="#fbfc69"/><stop offset="0.341" stop-color="#ffe487"/><stop offset="0.572" stop-color="#ffabad"/><stop offset="0.793" stop-color="#ff6cc7"/><stop offset="0.899" stop-color="#ff43d1"/><stop offset="0.947" stop-color="#ff26d5"/><stop offset="0.986" stop-color="#ff09d9"/><stop offset="1.000" stop-color="#ff03da"/></linearGradient><linearGradient id="g59" gradientUnits="userSpaceOnUse" x1="0" y1="132.5" x2="0" y2="335.5"><stop offset="0.000" stop-color="#dbff02"/><stop offset="0.034" stop-color="#e1ff0f"/><stop offset="0.108" stop-color="#eeff3c"/><stop offset="0.202" stop-color="#fdf961"/><stop offset="0.335" stop-color="#ffde81"/><stop offset="0.567" stop-color="#ffa8a7"/><stop offset="0.788" stop-color="#ff6cc1"/><stop offset="0.897" stop-color="#ff44cb"/><stop offset="0.946" stop-color="#ff28cf"/><stop offset="0.990" stop-color="#ff08d3"/><stop offset="1.000" stop-color="#ff04d4"/></linearGradient><linearGradient id="g60" gradientUnits="userSpaceOnUse" x1="0" y1="135.5" x2="0" y2="334.5"><stop offset="0.000" stop-color="#e3ff03"/><stop offset="0.035" stop-color="#e9ff0f"/><stop offset="0.111" stop-color="#f7fe3c"/><stop offset="0.196" stop-color="#fef45c"/><stop offset="0.352" stop-color="#ffd380"/><stop offset="0.603" stop-color="#ff9aa7"/><stop offset="0.809" stop-color="#ff62be"/><stop offset="0.905" stop-color="#ff3dc7"/><stop offset="0.950" stop-color="#ff22ca"/><stop offset="0.990" stop-color="#ff07ce"/><stop offset="1.000" stop-color="#ff03cf"/></linearGradient><linearGradient id="g61" gradientUnits="userSpaceOnUse" x1="0" y1="138.5" x2="0" y2="333.5"><stop offset="0.000" stop-color="#ebff03"/><stop offset="0.036" stop-color="#f2ff10"/><stop offset="0.108" stop-color="#fcfb3a"/><stop offset="0.195" stop-color="#ffed59"/><stop offset="0.359" stop-color="#ffcb7e"/><stop offset="0.621" stop-color="#ff91a4"/><stop offset="0.815" stop-color="#ff5cb9"/><stop offset="0.908" stop-color="#ff39c2"/><stop offset="0.954" stop-color="#ff1cc6"/><stop offset="0.990" stop-color="#ff06c9"/><stop offset="1.000" stop-color="#ff03ca"/></linearGradient><linearGradient id="g62" gradientUnits="userSpaceOnUse" x1="0" y1="141.5" x2="0" y2="331.5"><stop offset="0.000" stop-color="#f3ff03"/><stop offset="0.037" stop-color="#f9fd10"/><stop offset="0.111" stop-color="#fef53a"/><stop offset="0.205" stop-color="#ffe359"/><stop offset="0.379" stop-color="#ffc17d"/><stop offset="0.658" stop-color="#ff85a4"/><stop offset="0.837" stop-color="#ff54b6"/><stop offset="0.921" stop-color="#ff32be"/><stop offset="0.989" stop-color="#ff07c3"/><stop offset="1.000" stop-color="#ff04c4"/></linearGradient><linearGradient id="g63" gradientUnits="userSpaceOnUse" x1="0" y1="144.5" x2="0" y2="330.5"><stop offset="0.000" stop-color="#fafd03"/><stop offset="0.038" stop-color="#fdf910"/><stop offset="0.113" stop-color="#ffed39"/><stop offset="0.215" stop-color="#ffda58"/><stop offset="0.403" stop-color="#ffb67d"/><stop offset="0.699" stop-color="#ff77a4"/><stop offset="0.855" stop-color="#ff4bb3"/><stop offset="0.925" stop-color="#ff2eb9"/><stop offset="0.989" stop-color="#ff06be"/><stop offset="1.000" stop-color="#ff03bf"/></linearGradient><linearGradient id="g64" gradientUnits="userSpaceOnUse" x1="0" y1="147.5" x2="0" y2="328.5"><stop offset="0.000" stop-color="#fef803"/><stop offset="0.039" stop-color="#fff210"/><stop offset="0.116" stop-color="#ffe538"/><stop offset="0.221" stop-color="#ffd257"/><stop offset="0.414" stop-color="#ffaf7b"/><stop offset="0.718" stop-color="#ff6fa1"/><stop offset="0.867" stop-color="#ff45af"/><stop offset="0.934" stop-color="#ff29b5"/><stop offset="0.989" stop-color="#ff08b9"/><stop offset="1.000" stop-color="#ff04ba"/></linearGradient><linearGradient id="g65" gradientUnits="userSpaceOnUse" x1="0" y1="150.5" x2="0" y2="327.5"><stop offset="0.000" stop-color="#fff103"/><stop offset="0.040" stop-color="#ffea10"/><stop offset="0.119" stop-color="#ffdd37"/><stop offset="0.226" stop-color="#ffcb55"/><stop offset="0.429" stop-color="#ffa77a"/><stop offset="0.729" stop-color="#ff699e"/><stop offset="0.876" stop-color="#ff40ab"/><stop offset="0.938" stop-color="#ff24b1"/><stop offset="0.989" stop-color="#ff07b5"/><stop offset="1.000" stop-color="#ff03b6"/></linearGradient><linearGradient id="g66" gradientUnits="userSpaceOnUse" x1="0" y1="153.5" x2="0" y2="326.5"><stop offset="0.000" stop-color="#ffe903"/><stop offset="0.040" stop-color="#ffe310"/><stop offset="0.121" stop-color="#ffd636"/><stop offset="0.237" stop-color="#ffc355"/><stop offset="0.451" stop-color="#ff9e79"/><stop offset="0.740" stop-color="#ff649b"/><stop offset="0.879" stop-color="#ff3ca7"/><stop offset="0.936" stop-color="#ff22ac"/><stop offset="0.988" stop-color="#ff06b0"/><stop offset="1.000" stop-color="#ff03b1"/></linearGradient><linearGradient id="g67" gradientUnits="userSpaceOnUse" x1="0" y1="156.5" x2="0" y2="324.5"><stop offset="0.000" stop-color="#ffe203"/><stop offset="0.042" stop-color="#ffdb0f"/><stop offset="0.125" stop-color="#ffce35"/><stop offset="0.244" stop-color="#ffbc54"/><stop offset="0.470" stop-color="#ff9678"/><stop offset="0.750" stop-color="#ff5f97"/><stop offset="0.887" stop-color="#ff39a3"/><stop offset="0.946" stop-color="#ff1da8"/><stop offset="0.994" stop-color="#ff05ac"/><stop offset="1.000" stop-color="#ff04ac"/></linearGradient><linearGradient id="g68" gradientUnits="userSpaceOnUse" x1="0" y1="159.5" x2="0" y2="323.5"><stop offset="0.000" stop-color="#ffda03"/><stop offset="0.043" stop-color="#ffd40f"/><stop offset="0.128" stop-color="#ffc834"/><stop offset="0.250" stop-color="#ffb552"/><stop offset="0.488" stop-color="#ff8f77"/><stop offset="0.756" stop-color="#ff5b94"/><stop offset="0.884" stop-color="#ff379f"/><stop offset="0.945" stop-color="#ff1ca4"/><stop offset="0.988" stop-color="#ff06a7"/><stop offset="1.000" stop-color="#ff03a8"/></linearGradient><linearGradient id="g69" gradientUnits="userSpaceOnUse" x1="0" y1="162.5" x2="0" y2="322.5"><stop offset="0.000" stop-color="#ffd403"/><stop offset="0.050" stop-color="#ffcc12"/><stop offset="0.131" stop-color="#ffc133"/><stop offset="0.263" stop-color="#ffae52"/><stop offset="0.506" stop-color="#ff8776"/><stop offset="0.762" stop-color="#ff5691"/><stop offset="0.887" stop-color="#ff349b"/><stop offset="0.950" stop-color="#ff17a0"/><stop offset="0.994" stop-color="#ff04a3"/><stop offset="1.000" stop-color="#ff03a4"/></linearGradient><linearGradient id="g70" gradientUnits="userSpaceOnUse" x1="0" y1="165.5" x2="0" y2="320.5"><stop offset="0.000" stop-color="#ffcd03"/><stop offset="0.052" stop-color="#ffc612"/><stop offset="0.135" stop-color="#ffba33"/><stop offset="0.271" stop-color="#ffa751"/><stop offset="0.529" stop-color="#ff8075"/><stop offset="0.781" stop-color="#ff508e"/><stop offset="0.897" stop-color="#ff3098"/><stop offset="0.994" stop-color="#ff059f"/><stop offset="1.000" stop-color="#ff039f"/></linearGradient><linearGradient id="g71" gradientUnits="userSpaceOnUse" x1="0" y1="168.5" x2="0" y2="319.5"><stop offset="0.000" stop-color="#ffc603"/><stop offset="0.053" stop-color="#ffc012"/><stop offset="0.139" stop-color="#ffb432"/><stop offset="0.278" stop-color="#ffa150"/><stop offset="0.543" stop-color="#ff7a73"/><stop offset="0.788" stop-color="#ff4c8b"/><stop offset="0.901" stop-color="#ff2c94"/><stop offset="0.987" stop-color="#ff069a"/><stop offset="1.000" stop-color="#ff039b"/></linearGradient><linearGradient id="g72" gradientUnits="userSpaceOnUse" x1="0" y1="171.5" x2="0" y2="317.5"><stop offset="0.000" stop-color="#ffc003"/><stop offset="0.055" stop-color="#ffb911"/><stop offset="0.144" stop-color="#ffae31"/><stop offset="0.295" stop-color="#ff9a50"/><stop offset="0.582" stop-color="#ff7074"/><stop offset="0.808" stop-color="#ff4688"/><stop offset="0.911" stop-color="#ff2890"/><stop offset="0.993" stop-color="#ff0596"/><stop offset="1.000" stop-color="#ff0497"/></linearGradient><linearGradient id="g73" gradientUnits="userSpaceOnUse" x1="0" y1="174.5" x2="0" y2="316.5"><stop offset="0.000" stop-color="#ffba03"/><stop offset="0.056" stop-color="#ffb311"/><stop offset="0.148" stop-color="#ffa831"/><stop offset="0.303" stop-color="#ff954f"/><stop offset="0.606" stop-color="#ff6973"/><stop offset="0.824" stop-color="#ff4086"/><stop offset="0.915" stop-color="#ff248d"/><stop offset="0.986" stop-color="#ff0692"/><stop offset="1.000" stop-color="#ff0393"/></linearGradient><linearGradient id="g74" gradientUnits="userSpaceOnUse" x1="0" y1="177.5" x2="0" y2="315.5"><stop offset="0.000" stop-color="#ffb403"/><stop offset="0.058" stop-color="#ffae11"/><stop offset="0.152" stop-color="#ffa230"/><stop offset="0.312" stop-color="#ff8f4d"/><stop offset="0.623" stop-color="#ff6371"/><stop offset="0.826" stop-color="#ff3d83"/><stop offset="0.913" stop-color="#ff2389"/><stop offset="0.986" stop-color="#ff068e"/><stop offset="1.000" stop-color="#ff038f"/></linearGradient><linearGradient id="g75" gradientUnits="userSpaceOnUse" x1="0" y1="180.5" x2="0" y2="313.5"><stop offset="0.000" stop-color="#ffaf03"/><stop offset="0.060" stop-color="#ffa811"/><stop offset="0.158" stop-color="#ff9d2f"/><stop offset="0.331" stop-color="#ff884d"/><stop offset="0.662" stop-color="#ff5b71"/><stop offset="0.850" stop-color="#ff3680"/><stop offset="0.932" stop-color="#ff1b86"/><stop offset="0.992" stop-color="#ff058b"/><stop offset="1.000" stop-color="#ff038b"/></linearGradient><linearGradient id="g76" gradientUnits="userSpaceOnUse" x1="0" y1="183.5" x2="0" y2="312.5"><stop offset="0.000" stop-color="#ffa903"/><stop offset="0.062" stop-color="#ffa211"/><stop offset="0.163" stop-color="#ff972f"/><stop offset="0.341" stop-color="#ff834c"/><stop offset="0.690" stop-color="#ff5370"/><stop offset="0.860" stop-color="#ff317e"/><stop offset="0.938" stop-color="#ff1783"/><stop offset="0.992" stop-color="#ff0487"/><stop offset="1.000" stop-color="#ff0387"/></linearGradient><linearGradient id="g77" gradientUnits="userSpaceOnUse" x1="0" y1="186.5" x2="0" y2="310.5"><stop offset="0.000" stop-color="#ffa403"/><stop offset="0.065" stop-color="#ff9d11"/><stop offset="0.177" stop-color="#ff9130"/><stop offset="0.379" stop-color="#ff7b4e"/><stop offset="0.718" stop-color="#ff4c6f"/><stop offset="0.871" stop-color="#ff2e7b"/><stop offset="0.992" stop-color="#ff0583"/><stop offset="1.000" stop-color="#ff0483"/></linearGradient><linearGradient id="g78" gradientUnits="userSpaceOnUse" x1="0" y1="189.5" x2="0" y2="309.5"><stop offset="0.000" stop-color="#ff9e03"/><stop offset="0.067" stop-color="#ff9811"/><stop offset="0.183" stop-color="#ff8c30"/><stop offset="0.392" stop-color="#ff754e"/><stop offset="0.725" stop-color="#ff496c"/><stop offset="0.875" stop-color="#ff2a77"/><stop offset="0.992" stop-color="#ff057f"/><stop offset="1.000" stop-color="#ff0380"/></linearGradient><linearGradient id="g79" gradientUnits="userSpaceOnUse" x1="0" y1="192.5" x2="0" y2="308.5"><stop offset="0.000" stop-color="#ff9903"/><stop offset="0.078" stop-color="#ff9213"/><stop offset="0.190" stop-color="#ff872f"/><stop offset="0.405" stop-color="#ff704d"/><stop offset="0.733" stop-color="#ff456a"/><stop offset="0.879" stop-color="#ff2774"/><stop offset="0.983" stop-color="#ff067b"/><stop offset="1.000" stop-color="#ff037c"/></linearGradient><linearGradient id="g80" gradientUnits="userSpaceOnUse" x1="0" y1="195.5" x2="0" y2="306.5"><stop offset="0.000" stop-color="#ff9403"/><stop offset="0.081" stop-color="#ff8d13"/><stop offset="0.198" stop-color="#ff822e"/><stop offset="0.432" stop-color="#ff694d"/><stop offset="0.748" stop-color="#ff4167"/><stop offset="0.883" stop-color="#ff2671"/><stop offset="0.991" stop-color="#ff0577"/><stop offset="1.000" stop-color="#ff0478"/></linearGradient><linearGradient id="g81" gradientUnits="userSpaceOnUse" x1="0" y1="198.5" x2="0" y2="305.5"><stop offset="0.000" stop-color="#ff8f03"/><stop offset="0.084" stop-color="#ff8813"/><stop offset="0.206" stop-color="#ff7c2e"/><stop offset="0.449" stop-color="#ff644c"/><stop offset="0.757" stop-color="#ff3d65"/><stop offset="0.888" stop-color="#ff226e"/><stop offset="0.991" stop-color="#ff0474"/><stop offset="1.000" stop-color="#ff0375"/></linearGradient><linearGradient id="g82" gradientUnits="userSpaceOnUse" x1="0" y1="201.5" x2="0" y2="303.5"><stop offset="0.000" stop-color="#ff8a03"/><stop offset="0.088" stop-color="#ff8313"/><stop offset="0.216" stop-color="#ff772e"/><stop offset="0.471" stop-color="#ff5f4b"/><stop offset="0.775" stop-color="#ff3863"/><stop offset="0.902" stop-color="#ff1e6b"/><stop offset="0.990" stop-color="#ff0570"/><stop offset="1.000" stop-color="#ff0471"/></linearGradient><linearGradient id="g83" gradientUnits="userSpaceOnUse" x1="0" y1="204.5" x2="0" y2="302.5"><stop offset="0.000" stop-color="#ff8503"/><stop offset="0.092" stop-color="#ff7e13"/><stop offset="0.235" stop-color="#ff722f"/><stop offset="0.520" stop-color="#ff564d"/><stop offset="0.796" stop-color="#ff3261"/><stop offset="0.908" stop-color="#ff1a68"/><stop offset="0.990" stop-color="#ff056d"/><stop offset="1.000" stop-color="#ff036d"/></linearGradient><linearGradient id="g84" gradientUnits="userSpaceOnUse" x1="0" y1="207.5" x2="0" y2="301.5"><stop offset="0.000" stop-color="#ff8003"/><stop offset="0.096" stop-color="#ff7913"/><stop offset="0.234" stop-color="#ff6d2d"/><stop offset="0.521" stop-color="#ff534a"/><stop offset="0.798" stop-color="#ff305e"/><stop offset="0.915" stop-color="#ff1665"/><stop offset="0.989" stop-color="#ff0469"/><stop offset="1.000" stop-color="#ff036a"/></linearGradient><linearGradient id="g85" gradientUnits="userSpaceOnUse" x1="0" y1="210.5" x2="0" y2="299.5"><stop offset="0.000" stop-color="#ff7c03"/><stop offset="0.101" stop-color="#ff7413"/><stop offset="0.247" stop-color="#ff692c"/><stop offset="0.551" stop-color="#ff4d49"/><stop offset="0.809" stop-color="#ff2d5b"/><stop offset="0.933" stop-color="#ff1162"/><stop offset="1.000" stop-color="#ff0466"/></linearGradient><linearGradient id="g86" gradientUnits="userSpaceOnUse" x1="0" y1="213.5" x2="0" y2="298.5"><stop offset="0.000" stop-color="#ff7703"/><stop offset="0.106" stop-color="#ff6f13"/><stop offset="0.271" stop-color="#ff632d"/><stop offset="0.612" stop-color="#ff444b"/><stop offset="0.835" stop-color="#ff2659"/><stop offset="0.988" stop-color="#ff0562"/><stop offset="1.000" stop-color="#ff0362"/></linearGradient><linearGradient id="g87" gradientUnits="userSpaceOnUse" x1="0" y1="216.5" x2="0" y2="296.5"><stop offset="0.000" stop-color="#ff7203"/><stop offset="0.125" stop-color="#ff6a15"/><stop offset="0.300" stop-color="#ff5d2e"/><stop offset="0.675" stop-color="#ff3b4c"/><stop offset="0.863" stop-color="#ff2057"/><stop offset="1.000" stop-color="#ff045e"/></linearGradient><linearGradient id="g88" gradientUnits="userSpaceOnUse" x1="0" y1="219.5" x2="0" y2="295.5"><stop offset="0.000" stop-color="#ff6e03"/><stop offset="0.132" stop-color="#ff6515"/><stop offset="0.316" stop-color="#ff582e"/><stop offset="0.711" stop-color="#ff344b"/><stop offset="0.868" stop-color="#ff1c54"/><stop offset="0.987" stop-color="#ff055a"/><stop offset="1.000" stop-color="#ff045b"/></linearGradient><linearGradient id="g89" gradientUnits="userSpaceOnUse" x1="0" y1="222.5" x2="0" y2="294.5"><stop offset="0.000" stop-color="#ff6903"/><stop offset="0.139" stop-color="#ff6015"/><stop offset="0.333" stop-color="#ff532d"/><stop offset="0.722" stop-color="#ff3049"/><stop offset="0.875" stop-color="#ff1851"/><stop offset="0.986" stop-color="#ff0457"/><stop offset="1.000" stop-color="#ff0357"/></linearGradient><linearGradient id="g90" gradientUnits="userSpaceOnUse" x1="0" y1="225.5" x2="0" y2="292.5"><stop offset="0.000" stop-color="#ff6403"/><stop offset="0.149" stop-color="#ff5b14"/><stop offset="0.358" stop-color="#ff4d2d"/><stop offset="0.731" stop-color="#ff2d46"/><stop offset="0.896" stop-color="#ff144e"/><stop offset="1.000" stop-color="#ff0453"/></linearGradient><linearGradient id="g91" gradientUnits="userSpaceOnUse" x1="0" y1="228.5" x2="0" y2="291.5"><stop offset="0.000" stop-color="#ff6003"/><stop offset="0.159" stop-color="#ff5614"/><stop offset="0.381" stop-color="#ff482d"/><stop offset="0.746" stop-color="#ff2844"/><stop offset="1.000" stop-color="#ff0350"/></linearGradient><linearGradient id="g92" gradientUnits="userSpaceOnUse" x1="0" y1="231.5" x2="0" y2="289.5"><stop offset="0.000" stop-color="#ff5b03"/><stop offset="0.190" stop-color="#ff5117"/><stop offset="0.448" stop-color="#ff402f"/><stop offset="0.776" stop-color="#ff2441"/><stop offset="1.000" stop-color="#ff044c"/></linearGradient><linearGradient id="g93" gradientUnits="userSpaceOnUse" x1="0" y1="234.5" x2="0" y2="288.5"><stop offset="0.000" stop-color="#ff5603"/><stop offset="0.204" stop-color="#ff4c16"/><stop offset="0.481" stop-color="#ff3a2e"/><stop offset="0.778" stop-color="#ff203e"/><stop offset="1.000" stop-color="#ff0448"/></linearGradient><linearGradient id="g94" gradientUnits="userSpaceOnUse" x1="0" y1="237.5" x2="0" y2="287.5"><stop offset="0.000" stop-color="#ff5203"/><stop offset="0.220" stop-color="#ff4616"/><stop offset="0.520" stop-color="#ff342e"/><stop offset="0.780" stop-color="#ff1d3b"/><stop offset="0.980" stop-color="#ff0544"/><stop offset="1.000" stop-color="#ff0344"/></linearGradient><linearGradient id="g95" gradientUnits="userSpaceOnUse" x1="0" y1="240.5" x2="0" y2="285.5"><stop offset="0.000" stop-color="#ff4d03"/><stop offset="0.267" stop-color="#ff4018"/><stop offset="0.622" stop-color="#ff2a30"/><stop offset="0.889" stop-color="#ff0f3c"/><stop offset="1.000" stop-color="#ff0440"/></linearGradient><linearGradient id="g96" gradientUnits="userSpaceOnUse" x1="0" y1="243.5" x2="0" y2="284.5"><stop offset="0.000" stop-color="#ff4803"/><stop offset="0.293" stop-color="#ff3a18"/><stop offset="0.683" stop-color="#ff2230"/><stop offset="1.000" stop-color="#ff043c"/></linearGradient><linearGradient id="g97" gradientUnits="userSpaceOnUse" x1="0" y1="246.5" x2="0" y2="282.5"><stop offset="0.000" stop-color="#ff4303"/><stop offset="0.361" stop-color="#ff331a"/><stop offset="0.722" stop-color="#ff1c2d"/><stop offset="1.000" stop-color="#ff0437"/></linearGradient><linearGradient id="g98" gradientUnits="userSpaceOnUse" x1="0" y1="249.5" x2="0" y2="281.5"><stop offset="0.000" stop-color="#ff3d03"/><stop offset="0.594" stop-color="#ff2224"/><stop offset="1.000" stop-color="#ff0433"/></linearGradient><linearGradient id="g99" gradientUnits="userSpaceOnUse" x1="0" y1="252.5" x2="0" y2="280.5"><stop offset="0.000" stop-color="#ff3803"/><stop offset="0.571" stop-color="#ff1f1f"/><stop offset="1.000" stop-color="#ff032e"/></linearGradient><linearGradient id="g100" gradientUnits="userSpaceOnUse" x1="0" y1="255.5" x2="0" y2="278.5"><stop offset="0.000" stop-color="#ff3203"/><stop offset="0.609" stop-color="#ff191c"/><stop offset="1.000" stop-color="#ff0429"/></linearGradient><linearGradient id="g101" gradientUnits="userSpaceOnUse" x1="0" y1="258.5" x2="0" y2="277.5"><stop offset="0.000" stop-color="#ff2b03"/><stop offset="0.632" stop-color="#ff1318"/><stop offset="1.000" stop-color="#ff0423"/></linearGradient><linearGradient id="g102" gradientUnits="userSpaceOnUse" x1="0" y1="261.5" x2="0" y2="276.5"><stop offset="0.000" stop-color="#ff2403"/><stop offset="1.000" stop-color="#ff031d"/></linearGradient><linearGradient id="g103" gradientUnits="userSpaceOnUse" x1="0" y1="264.5" x2="0" y2="274.5"><stop offset="0.000" stop-color="#ff1b03"/><stop offset="1.000" stop-color="#ff0414"/></linearGradient><linearGradient id="g104" gradientUnits="userSpaceOnUse" x1="0" y1="267.5" x2="0" y2="273.5"><stop offset="0.000" stop-color="#ff1003"/><stop offset="1.000" stop-color="#ff040c"/></linearGradient></defs><g clip-path="url(#loc)" shape-rendering="crispEdges"><rect x="0" y="71" width="3" height="95" fill="url(#g0)"/><rect x="3" y="57" width="3" height="135" fill="url(#g1)"/><rect x="6" y="48" width="3" height="164" fill="url(#g2)"/><rect x="9" y="41" width="3" height="189" fill="url(#g3)"/><rect x="12" y="36" width="3" height="210" fill="url(#g4)"/><rect x="15" y="33" width="3" height="227" fill="url(#g5)"/><rect x="18" y="31" width="3" height="243" fill="url(#g6)"/><rect x="21" y="29" width="3" height="257" fill="url(#g7)"/><rect x="24" y="28" width="3" height="269" fill="url(#g8)"/><rect x="27" y="27" width="3" height="281" fill="url(#g9)"/><rect x="30" y="27" width="3" height="290" fill="url(#g10)"/><rect x="33" y="27" width="3" height="298" fill="url(#g11)"/><rect x="36" y="27" width="3" height="306" fill="url(#g12)"/><rect x="39" y="27" width="3" height="314" fill="url(#g13)"/><rect x="42" y="28" width="3" height="320" fill="url(#g14)"/><rect x="45" y="28" width="3" height="327" fill="url(#g15)"/><rect x="48" y="29" width="3" height="331" fill="url(#g16)"/><rect x="51" y="31" width="3" height="334" fill="url(#g17)"/><rect x="54" y="32" width="3" height="338" fill="url(#g18)"/><rect x="57" y="33" width="3" height="340" fill="url(#g19)"/><rect x="60" y="35" width="3" height="341" fill="url(#g20)"/><rect x="63" y="36" width="3" height="343" fill="url(#g21)"/><rect x="66" y="38" width="3" height="343" fill="url(#g22)"/><rect x="69" y="40" width="3" height="344" fill="url(#g23)"/><rect x="72" y="42" width="3" height="342" fill="url(#g24)"/><rect x="75" y="43" width="3" height="341" fill="url(#g25)"/><rect x="78" y="45" width="3" height="337" fill="url(#g26)"/><rect x="81" y="47" width="3" height="334" fill="url(#g27)"/><rect x="84" y="49" width="3" height="331" fill="url(#g28)"/><rect x="87" y="52" width="3" height="326" fill="url(#g29)"/><rect x="90" y="54" width="3" height="323" fill="url(#g30)"/><rect x="93" y="56" width="3" height="319" fill="url(#g31)"/><rect x="96" y="58" width="3" height="316" fill="url(#g32)"/><rect x="99" y="61" width="3" height="312" fill="url(#g33)"/><rect x="102" y="63" width="3" height="308" fill="url(#g34)"/><rect x="105" y="65" width="3" height="305" fill="url(#g35)"/><rect x="108" y="68" width="3" height="301" fill="url(#g36)"/><rect x="111" y="70" width="3" height="297" fill="url(#g37)"/><rect x="114" y="73" width="3" height="293" fill="url(#g38)"/><rect x="117" y="76" width="3" height="288" fill="url(#g39)"/><rect x="120" y="78" width="3" height="285" fill="url(#g40)"/><rect x="123" y="81" width="3" height="281" fill="url(#g41)"/><rect x="126" y="84" width="3" height="276" fill="url(#g42)"/><rect x="129" y="86" width="3" height="273" fill="url(#g43)"/><rect x="132" y="89" width="3" height="268" fill="url(#g44)"/><rect x="135" y="92" width="3" height="264" fill="url(#g45)"/><rect x="138" y="95" width="3" height="260" fill="url(#g46)"/><rect x="141" y="98" width="3" height="255" fill="url(#g47)"/><rect x="144" y="100" width="3" height="252" fill="url(#g48)"/><rect x="147" y="103" width="3" height="247" fill="url(#g49)"/><rect x="150" y="106" width="3" height="243" fill="url(#g50)"/><rect x="153" y="109" width="3" height="239" fill="url(#g51)"/><rect x="156" y="112" width="3" height="234" fill="url(#g52)"/><rect x="159" y="115" width="3" height="230" fill="url(#g53)"/><rect x="162" y="118" width="3" height="225" fill="url(#g54)"/><rect x="165" y="121" width="3" height="221" fill="url(#g55)"/><rect x="168" y="124" width="3" height="217" fill="url(#g56)"/><rect x="171" y="127" width="3" height="212" fill="url(#g57)"/><rect x="174" y="129" width="3" height="209" fill="url(#g58)"/><rect x="177" y="132" width="3" height="204" fill="url(#g59)"/><rect x="180" y="135" width="3" height="200" fill="url(#g60)"/><rect x="183" y="138" width="3" height="196" fill="url(#g61)"/><rect x="186" y="141" width="3" height="191" fill="url(#g62)"/><rect x="189" y="144" width="3" height="187" fill="url(#g63)"/><rect x="192" y="147" width="3" height="182" fill="url(#g64)"/><rect x="195" y="150" width="3" height="178" fill="url(#g65)"/><rect x="198" y="153" width="3" height="174" fill="url(#g66)"/><rect x="201" y="156" width="3" height="169" fill="url(#g67)"/><rect x="204" y="159" width="3" height="165" fill="url(#g68)"/><rect x="207" y="162" width="3" height="161" fill="url(#g69)"/><rect x="210" y="165" width="3" height="156" fill="url(#g70)"/><rect x="213" y="168" width="3" height="152" fill="url(#g71)"/><rect x="216" y="171" width="3" height="147" fill="url(#g72)"/><rect x="219" y="174" width="3" height="143" fill="url(#g73)"/><rect x="222" y="177" width="3" height="139" fill="url(#g74)"/><rect x="225" y="180" width="3" height="134" fill="url(#g75)"/><rect x="228" y="183" width="3" height="130" fill="url(#g76)"/><rect x="231" y="186" width="3" height="125" fill="url(#g77)"/><rect x="234" y="189" width="3" height="121" fill="url(#g78)"/><rect x="237" y="192" width="3" height="117" fill="url(#g79)"/><rect x="240" y="195" width="3" height="112" fill="url(#g80)"/><rect x="243" y="198" width="3" height="108" fill="url(#g81)"/><rect x="246" y="201" width="3" height="103" fill="url(#g82)"/><rect x="249" y="204" width="3" height="99" fill="url(#g83)"/><rect x="252" y="207" width="3" height="95" fill="url(#g84)"/><rect x="255" y="210" width="3" height="90" fill="url(#g85)"/><rect x="258" y="213" width="3" height="86" fill="url(#g86)"/><rect x="261" y="216" width="3" height="81" fill="url(#g87)"/><rect x="264" y="219" width="3" height="77" fill="url(#g88)"/><rect x="267" y="222" width="3" height="73" fill="url(#g89)"/><rect x="270" y="225" width="3" height="68" fill="url(#g90)"/><rect x="273" y="228" width="3" height="64" fill="url(#g91)"/><rect x="276" y="231" width="3" height="59" fill="url(#g92)"/><rect x="279" y="234" width="3" height="55" fill="url(#g93)"/><rect x="282" y="237" width="3" height="51" fill="url(#g94)"/><rect x="285" y="240" width="3" height="46" fill="url(#g95)"/><rect x="288" y="243" width="3" height="42" fill="url(#g96)"/><rect x="291" y="246" width="3" height="37" fill="url(#g97)"/><rect x="294" y="249" width="3" height="33" fill="url(#g98)"/><rect x="297" y="252" width="3" height="29" fill="url(#g99)"/><rect x="300" y="255" width="3" height="24" fill="url(#g100)"/><rect x="303" y="258" width="3" height="20" fill="url(#g101)"/><rect x="306" y="261" width="3" height="16" fill="url(#g102)"/><rect x="309" y="264" width="3" height="11" fill="url(#g103)"/><rect x="312" y="267" width="3" height="7" fill="url(#g104)"/></g><g fill="#000" fill-opacity="0.12" shape-rendering="crispEdges"><rect x="42" y="0" width="1" height="384"/><rect x="85" y="0" width="1" height="384"/><rect x="127" y="0" width="1" height="384"/><rect x="169" y="0" width="1" height="384"/><rect x="213" y="0" width="1" height="384"/><rect x="255" y="0" width="1" height="384"/><rect x="297" y="0" width="1" height="384"/><rect x="340" y="0" width="1" height="384"/><rect x="0" y="341" width="376" height="1"/><rect x="0" y="297" width="376" height="1"/><rect x="0" y="255" width="376" height="1"/><rect x="0" y="213" width="376" height="1"/><rect x="0" y="170" width="376" height="1"/><rect x="0" y="128" width="376" height="1"/><rect x="0" y="86" width="376" height="1"/><rect x="0" y="42" width="376" height="1"/><rect x="0" y="0" width="376" height="1"/></g><g fill="#6a6a6a" shape-rendering="crispEdges"><rect x="0" y="0" width="1" height="384"/><rect x="0" y="383" width="376" height="1"/></g></svg>


<svg class="a" style="left:0;top:0" width="934" height="749" shape-rendering="crispEdges">
<polygon points="219.3,305.5 360.1,428.5 134,520.7" fill="none" stroke="#000" stroke-width="1.35" shape-rendering="auto"/>
<polygon points="202.8,296.2 337.6,408.0 140.7,515.4" fill="none" stroke="#f2a034" stroke-width="1.5" shape-rendering="auto"/>
</svg>
<div class="a cl" style="left:75.5px;top:169px;">y</div>
<div class="a cl" style="left:75.5px;top:204px;">0.8</div>
<div class="a cl" style="left:75.5px;top:290px;">0.6</div>
<div class="a cl" style="left:75.5px;top:375px;">0.4</div>
<div class="a cl" style="left:75.5px;top:460px;">0.2</div>
<div class="a cl" style="left:76px;top:538.2px;">0</div>
<div class="a cl cc" style="left:157.5px;top:538.2px;">0.2</div>
<div class="a cl cc" style="left:241.7px;top:538.2px;">0.4</div>
<div class="a cl cc" style="left:327px;top:538.2px;">0.6</div>
<div class="a cl cc" style="left:412.6px;top:538.2px;">0.8</div>
<div class="a" style="left:72px;top:168px;width:376px;height:384px;overflow:hidden;"><div class="a cl" style="left:373px;top:369px;">x</div></div>
<div class="a" style="left:323px;top:243.5px;font-size:19.6px;font-weight:bold;">Monitor</div>
<div class="a" style="left:323px;top:268px;font-size:19.6px;font-weight:bold;color:#f5a623;">sRGB</div>

<!-- bar chart -->
<svg class="a" style="left:482px;top:168px" width="386" height="386">
<defs><linearGradient id="bg" x1="0" y1="0" x2="0" y2="1"><stop offset="0" stop-color="#e04a14"/><stop offset="0.2" stop-color="#ec9814"/><stop offset="0.4" stop-color="#e8ea12"/><stop offset="0.6" stop-color="#acd012"/><stop offset="0.8" stop-color="#66a412"/><stop offset="1" stop-color="#388a10"/></linearGradient></defs>
<rect x="2" y="1" width="381" height="382" fill="url(#bg)"/>
<rect x="2" y="77" width="381" height="1" fill="rgba(0,0,0,0.07)"/>
<rect x="2" y="153" width="381" height="1" fill="rgba(0,0,0,0.07)"/>
<rect x="2" y="228" width="381" height="1" fill="rgba(0,0,0,0.07)"/>
<rect x="2" y="305" width="381" height="1" fill="rgba(0,0,0,0.07)"/>
<rect x="68.75" y="325.75" width="13.5" height="57.75" fill="#303030" stroke="#000" stroke-width="1.5"/>
<rect x="86.75" y="316.75" width="13.5" height="66.75" fill="#484848" stroke="#000" stroke-width="1.5"/>
<rect x="104.75" y="266.75" width="13.5" height="116.75" fill="#888888" stroke="#000" stroke-width="1.5"/>
<rect x="122.75" y="289.75" width="13.5" height="93.75" fill="#c8c8c8" stroke="#000" stroke-width="1.5"/>
<rect x="158.75" y="224.75" width="13.5" height="158.75" fill="#ff0000" stroke="#000" stroke-width="1.5"/>
<rect x="176.75" y="301.25" width="13.5" height="82.25" fill="#00ff00" stroke="#000" stroke-width="1.5"/>
<rect x="194.75" y="54.75" width="13.5" height="328.75" fill="#0000ff" stroke="#000" stroke-width="1.5"/>
<rect x="212.75" y="281.75" width="13.5" height="101.75" fill="#00ffff" stroke="#000" stroke-width="1.5"/>
<rect x="230.75" y="367.25" width="13.5" height="16.25" fill="#ff00ff" stroke="#000" stroke-width="1.5"/>
<rect x="248.75" y="274.25" width="13.5" height="109.25" fill="#ffff00" stroke="#000" stroke-width="1.5"/>
<rect x="266.75" y="305.75" width="13.5" height="77.75" fill="#b05858" stroke="#000" stroke-width="1.5"/>
<rect x="284.75" y="305.75" width="13.5" height="77.75" fill="#58a858" stroke="#000" stroke-width="1.5"/>
<rect x="302.75" y="190.25" width="13.5" height="193.25" fill="#5858b0" stroke="#000" stroke-width="1.5"/>
<rect x="320.75" y="243.75" width="13.5" height="139.75" fill="#58b0b0" stroke="#000" stroke-width="1.5"/>
<rect x="338.75" y="313.05" width="13.5" height="70.45" fill="#b058b0" stroke="#000" stroke-width="1.5"/>
<rect x="356.75" y="289.25" width="13.5" height="94.25" fill="#b0b058" stroke="#000" stroke-width="1.5"/>
<rect x="0" y="0" width="1" height="385" fill="rgba(0,0,0,0.45)"/><rect x="1" y="0" width="1" height="384" fill="#18180c"/><rect x="1" y="0" width="383" height="1" fill="#18100c"/><rect x="2" y="1" width="381" height="1" fill="rgba(0,0,0,0.45)"/><rect x="383" y="0" width="1" height="384" fill="#18180c"/><rect x="384" y="0" width="1" height="385" fill="rgba(0,0,0,0.4)"/><rect x="1" y="383" width="383" height="1" fill="#0c0c0c"/><rect x="1" y="384" width="383" height="1" fill="rgba(0,0,0,0.4)"/><rect x="2" y="382" width="381" height="1" fill="rgba(0,0,0,0.3)"/>
</svg>
<div class="a lbl" style="left:486px;top:169.5px;">10 d E 94</div>
<div class="a lbl" style="left:485px;top:239.5px;">8 d E 94</div>
<div class="a lbl" style="left:485px;top:315.5px;">6 d E 94</div>
<div class="a lbl" style="left:485px;top:390.5px;">4 d E 94</div>
<div class="a lbl" style="left:485px;top:466.5px;">2 d E 94</div>

<!-- table -->
<div class="a tbl" style="left:165px;top:570.8px;">Target</div>
<div class="a tbl" style="left:261px;top:570.8px;">Current</div>
<div class="a tbl" style="left:357px;top:570.8px;">Deviation</div>
<div class="a tbl" style="left:69px;top:593.5px;">Gamma</div>
<div class="a tbl" style="left:165px;top:593.5px;">2.2</div>
<div class="a tbl grn" style="left:261px;top:593.5px;">2.1</div>
<div class="a tbl grn" style="left:357px;top:593.5px;">4%</div>
<div class="a tbl" style="left:69px;top:616px;">Kelvin</div>
<div class="a tbl" style="left:165px;top:616px;">6500</div>
<div class="a tbl org" style="left:261px;top:616px;">4321</div>
<div class="a tbl org" style="left:357px;top:616px;">34%</div>
<div class="a tbl" style="left:69px;top:638.5px;">cd/m2</div>
<div class="a tbl" style="left:165px;top:638.5px;">120</div>
<div class="a tbl org" style="left:261px;top:638.5px;">136</div>
<div class="a tbl org" style="left:357px;top:638.5px;">13%</div>

<div class="a tbl" style="left:483px;top:570.8px;transform:scaleX(1.02);">Delta E Average</div>
<div class="a tbl grn" style="left:652px;top:570.8px;">2.7</div>
<div class="a tbl" style="left:483px;top:593.5px;">Delta E Maximum</div>
<div class="a tbl org" style="left:652px;top:593.5px;">8.6</div>

<!-- buttons -->
<div class="btn" style="left:28px;top:698px;width:109px;height:31px;border:3px solid #0a78d4;"><div style="position:absolute;left:0;top:0;right:0;bottom:0;border:1px dotted #000;background:#e4e4e4;"></div></div>
<div class="btn" style="left:156px;top:698px;width:109px;height:31px;"></div>
<div class="btn" style="left:670px;top:698px;width:109px;height:31px;"></div>
<div class="btn" style="left:798px;top:698px;width:109px;height:31px;"></div>
<div class="a bt" style="left:43px;transform:scaleX(0.955);">Main Menu</div>
<div class="a bt" style="left:171.2px;transform:scaleX(0.975);">Calibration</div>
<div class="a bt" style="left:704.8px;transform:scaleX(0.95);">Save</div>
<div class="a bt" style="left:835.5px;transform:scaleX(1.0);">Quit</div>

</body></html>
